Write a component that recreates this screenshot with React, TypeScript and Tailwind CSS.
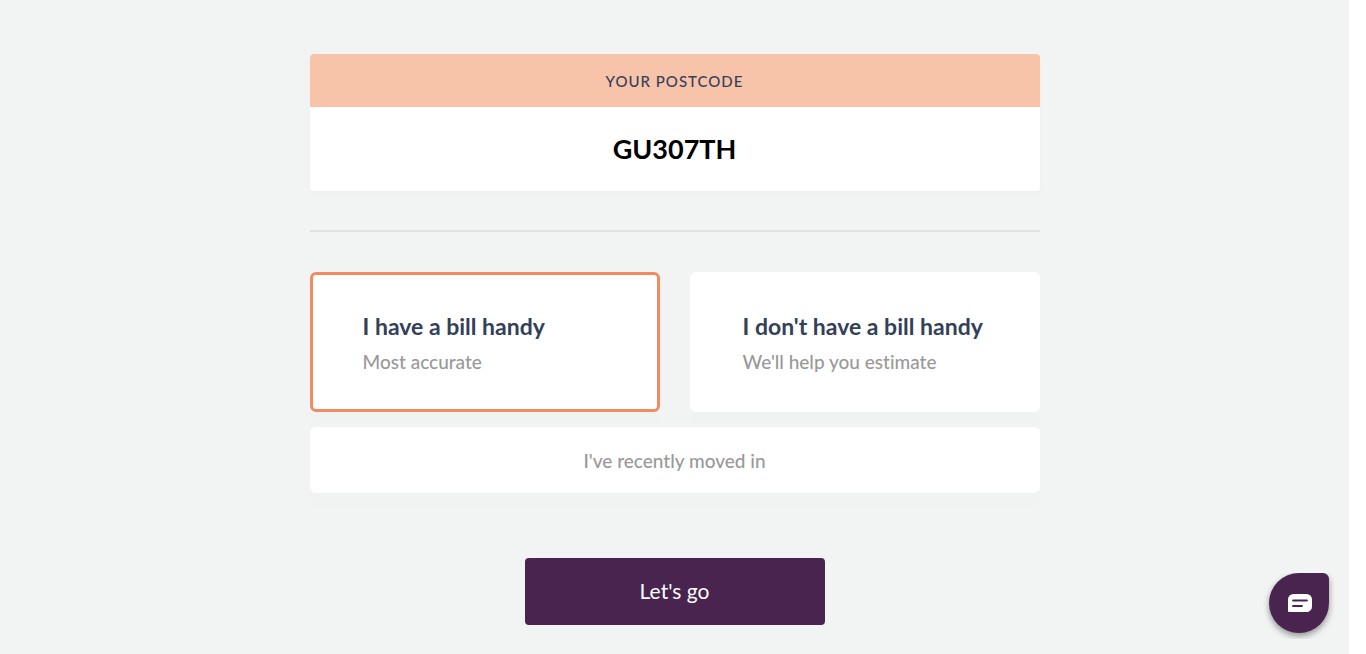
import { useState } from "react";

type Choice = "bill" | "estimate" | "moved";

const cardBase =
  "cursor-pointer rounded-md border-3 bg-white shadow-[0_16px_2px_1px_rgba(0,0,0,0.004)] has-focus-visible:outline-2";

function OptionCard(props: {
  value: Choice;
  title: string;
  hint: string;
  selected: Choice;
  onSelect: (value: Choice) => void;
}) {
  const { value, title, hint, selected, onSelect } = props;
  const border = selected === value ? "border-[#f28b62]" : "border-white";
  return (
    <label className={`${cardBase} ${border} flex flex-1 flex-col px-[50px] pt-[35px] pb-[34px]`}>
      <input
        type="radio"
        name="bill"
        className="sr-only"
        checked={selected === value}
        onChange={() => onSelect(value)}
      />
      <span className="text-[23px] leading-8 font-bold text-[#344059]">{title}</span>
      <span className="mt-[7px] text-[19px] leading-[26px] font-medium text-[#999999]">{hint}</span>
    </label>
  );
}

function ChatIcon() {
  return (
    <svg width="24" height="18" viewBox="0 0 24 18" aria-hidden="true">
      <path
        fill="#ffffff"
        d="M5.5 0h13A5.5 5.5 0 0 1 24 5.5v7a5.5 5.5 0 0 1-5.5 5.5H1a1 1 0 0 1-1-1V5.5A5.5 5.5 0 0 1 5.5 0z"
      />
      <path stroke="#48244f" strokeWidth="1.8" strokeLinecap="round" d="M5 6.5h14M5 12h9" />
    </svg>
  );
}

export default function App() {
  const [selected, setSelected] = useState<Choice>("bill");

  return (
    <div className="bg-white pr-[17px] font-['Lato','Noto_Sans',sans-serif] [font-variant-ligatures:none]">
      <main className="min-h-screen bg-[#f2f4f4] pt-[54px]">
        <div className="mx-auto flex max-w-[730px] flex-col">
          <section className="overflow-hidden rounded bg-white text-center shadow-[0_3px_6px_rgba(0,0,0,0.02)]">
            <h2 className="bg-[#f7c3a9] pt-[15px] pb-3.5 text-[15px] leading-6 font-medium tracking-[1px] text-[#344059] uppercase">
              Your postcode
            </h2>
            <p className="py-6 text-[27px] leading-9 font-bold text-black">GU307TH</p>
          </section>

          <hr className="mt-[39px] mb-10 border-t-2 border-[#dfe2e1]" />

          <div role="radiogroup" aria-label="Your bill" className="flex flex-col gap-[15px]">
            <div className="flex gap-[30px]">
              <OptionCard
                value="bill"
                title="I have a bill handy"
                hint="Most accurate"
                selected={selected}
                onSelect={setSelected}
              />
              <OptionCard
                value="estimate"
                title="I don't have a bill handy"
                hint="We'll help you estimate"
                selected={selected}
                onSelect={setSelected}
              />
            </div>
            <label
              className={`${cardBase} ${
                selected === "moved" ? "border-[#f28b62]" : "border-white"
              } pt-[18px] pb-4 text-center text-[19px] leading-[26px] font-medium text-[#999999]`}
            >
              <input
                type="radio"
                name="bill"
                className="sr-only"
                checked={selected === "moved"}
                onChange={() => setSelected("moved")}
              />
              I've recently moved in
            </label>
          </div>

          <button
            type="button"
            className="mt-[65px] w-[300px] cursor-pointer self-center rounded bg-[#48244f] pt-[17px] pb-[18px] text-[21px] leading-8 text-white"
          >
            Let's go
          </button>
        </div>
      </main>

      <div className="fixed right-[31px] bottom-[15px] overflow-hidden px-1.5 pb-1.5">
        <button
          type="button"
          aria-label="Open chat"
          className="flex size-[60px] cursor-pointer items-center justify-center rounded-[30px] rounded-tr-md bg-[#48244f] pl-0.5 shadow-[0_3px_6px_rgba(0,0,0,0.4)]"
        >
          <ChatIcon />
        </button>
      </div>
    </div>
  );
}
